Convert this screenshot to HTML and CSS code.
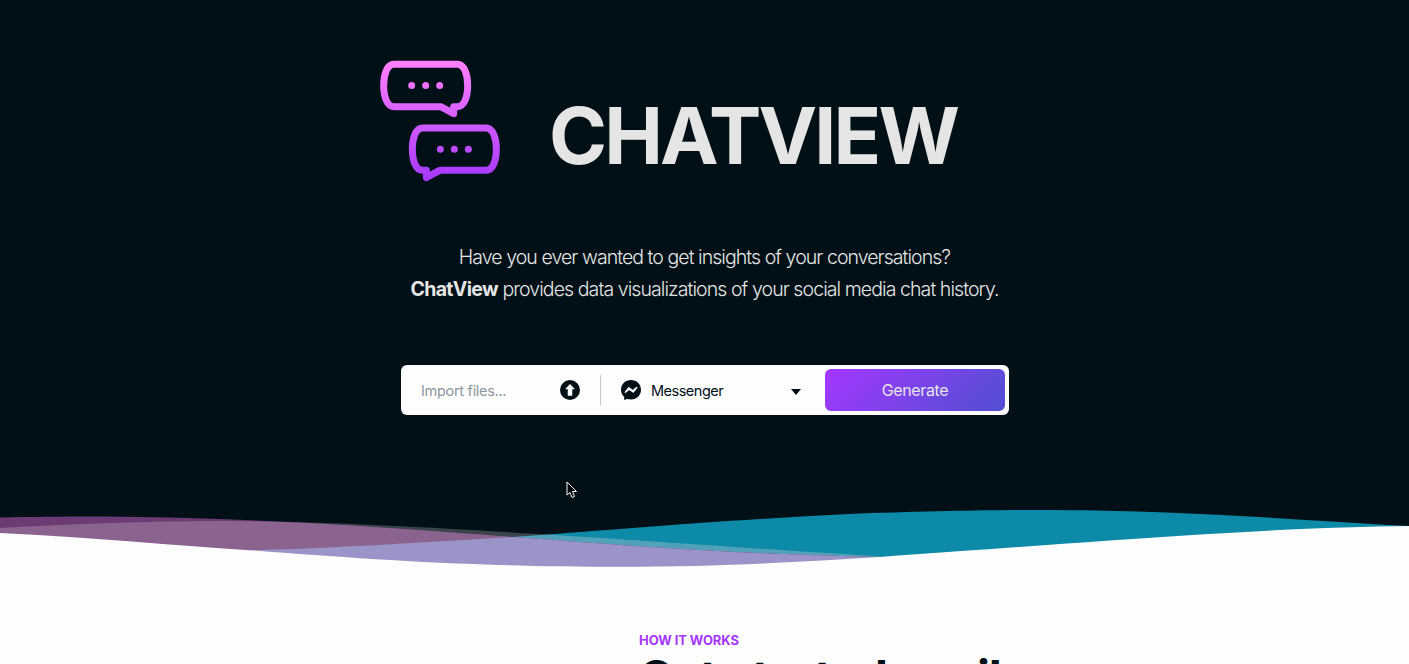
FILE: index.html
```html
<!DOCTYPE html>
<html lang="en">
<head>
<meta charset="utf-8">
<title>ChatView</title>
<link rel="stylesheet" href="styles.css">
</head>
<body>
<header class="hero">
  <div class="brand">
    <svg class="logo" viewBox="0 0 420 420" fill="none">
      <defs>
        <linearGradient id="logo-fill" gradientUnits="userSpaceOnUse" x1="0" y1="33" x2="0" y2="393">
          <stop offset="0" stop-color="#ff80ff"/>
          <stop offset="1" stop-color="#a537ff"/>
        </linearGradient>
      </defs>
      <g stroke="url(#logo-fill)" stroke-width="21" stroke-linejoin="round">
        <path d="M72 43H262C284 43 293 76 293 106C293 138 284 170 262 170H251V191L212 170H72C50 170 41 138 41 106C41 76 50 43 72 43Z"/>
        <path d="M158 234H348C370 234 379 267 379 297C379 329 370 361 348 361H209L169 383V361H158C136 361 127 329 127 297C127 267 136 234 158 234Z"/>
      </g>
      <g fill="url(#logo-fill)">
        <circle cx="125" cy="106.500" r="10.500"/><circle cx="167" cy="106.500" r="10.500"/><circle cx="209" cy="106.500" r="10.500"/>
        <circle cx="211" cy="298" r="10.500"/><circle cx="253" cy="298" r="10.500"/><circle cx="295" cy="298" r="10.500"/>
      </g>
    </svg>
    <h1 class="title">CHATVIEW</h1>
  </div>
  <p class="intro"><span class="line line-first">Have you ever wanted to get insights of your conversations?</span><span class="line line-second"><strong>ChatView</strong> provides data visualizations of your social media chat history.</span></p>
  <form class="import">
    <label class="files"><span class="placeholder">Import files...</span>
      <svg class="icon" viewBox="0 0 20 20"><circle cx="10" cy="10" r="10" fill="#001016"/><path d="M10 4.300L14.400 9H12V15.500H8V9H5.600Z" fill="#fdfdfd" stroke="#fdfdfd" stroke-width=".5" stroke-linejoin="round"/></svg>
    </label>
    <div class="source">
      <svg class="icon" viewBox="0 0 20 20"><path d="M10 0C4.300 0 0 4.200 0 9.700C0 12.600 1.200 15.100 3.200 16.800V20L6.300 18.900C7.500 19.200 8.700 19.400 10 19.400C15.700 19.400 20 15.200 20 9.700S15.700 0 10 0Z" fill="#001016"/><path d="M4.400 12.200L7.800 7.700L11.800 10.700L15.700 7.500L12.200 12L8.200 9.100Z" fill="#fdfdfd" stroke="#fdfdfd" stroke-width="1.400" stroke-linejoin="round"/></svg>
      <span class="source-name">Messenger</span>
      <svg class="caret" viewBox="0 0 10 6"><path d="M0 0H10L5 6Z" fill="#001016"/></svg>
    </div>
    <button class="generate" type="button">Generate</button>
  </form>
</header>
<svg class="waves" viewBox="0 500 1409 80">
  <defs>
    <path id="purple" d="M0 517.500C90 515.500 150 516.500 220 519C350 524 430 531 513 537C610 544 700 553 880 557V580H0Z"/>
    <path id="mist" d="M0 528C80 523.500 160 520.500 230 521C350 522 450 529 540 534C620 539 700 545 880 556.500V580H0Z"/>
    <path id="teal" d="M250 550.300C360 547 440 541 513 537C600 531 720 520 860 513.500C1000 508.800 1070 509.200 1160 512.300C1250 515.500 1330 522 1409 526V580H250Z"/>
    <clipPath id="in-mist"><use href="#mist"/></clipPath>
    <clipPath id="in-teal"><use href="#teal"/></clipPath>
  </defs>
  <use href="#mist" fill="#3a454b"/>
  <use href="#teal" fill="#0c8aa7"/>
  <use href="#teal" fill="#51a2b8" clip-path="url(#in-mist)"/>
  <use href="#purple" fill="#6d3b73"/>
  <use href="#purple" fill="#8b638f" clip-path="url(#in-mist)"/>
  <use href="#purple" fill="#9a94c8" clip-path="url(#in-teal)"/>
  <path d="M0 533C90 537.500 170 545 250 550.300C360 558.500 460 566.800 620 566.800C720 566.500 800 562 880 557C1000 548.500 1100 541 1200 534.500C1280 529.500 1350 526.500 1409 526V580H0Z" fill="#fdfdfd"/>
</svg>
<main class="steps">
  <p class="eyebrow">HOW IT WORKS</p>
  <h2 class="heading">Get started easily</h2>
</main>
<svg class="cursor" viewBox="0 0 12 18"><path d="M1 1V14L4 11.500L6 16.500L8.500 15.500L6.500 10.500H10.500Z" fill="#000" stroke="#fff" stroke-width="1"/></svg>
</body>
</html>
```
FILE: styles.css
```css
* { box-sizing: border-box; }
body {
  margin: 0;
  height: 664px;
  overflow: hidden;
  background: #fdfdfd;
  color: #001016;
  font-family: Inter, "Liberation Sans", sans-serif;
}
.hero {
  height: 500px;
  padding-top: 50px;
  background: #001016;
  color: #e5e5e5;
}
.brand { display: flex; height: 140px; padding-left: 370px; }
.logo { flex: none; width: 140px; height: 140px; }
.title {
  margin: 36px 0 0 39px;
  font-size: 78.500px;
  line-height: 100px;
  font-weight: 700;
  letter-spacing: -2.800px;
}
.intro {
  margin: 51px 0 0;
  font-size: 19.500px;
  line-height: 32px;
  font-weight: 300;
  text-align: center;
  letter-spacing: -.94px;
}
.line { display: block; white-space: nowrap; }
.line-second { letter-spacing: -.92px; }
.intro strong { font-weight: 700; letter-spacing: -.65px; }
.import {
  display: flex;
  width: 608px;
  height: 50px;
  margin: 60px 0 0 401px;
  padding: 4px;
  border-radius: 6px;
  background: #fdfdfd;
  color: #001016;
  font-size: 14.500px;
}
.files {
  display: flex;
  align-items: center;
  justify-content: space-between;
  width: 196px;
  height: 30px;
  margin-top: 6px;
  padding: 0 20px 0 16px;
  border-right: 1px solid #c4c6c8;
}
.placeholder { padding-top: 1px; color: #8d979e; letter-spacing: -.3px; }
.icon { flex: none; width: 20px; height: 20px; }
.source { display: flex; align-items: center; width: 224px; padding: 0 23px 0 20px; }
.source-name { margin-left: 10px; padding-top: 1px; letter-spacing: -.5px; }
.caret { width: 10px; height: 6px; margin: 3px 1px 0 auto; }
.generate {
  width: 180px;
  height: 42px;
  padding: 0;
  border: 0;
  border-radius: 6px;
  background: linear-gradient(135deg, #a537ff, #5050d2);
  color: #e5e5e5;
  font: 400 16px Inter, sans-serif;
  letter-spacing: -.35px;
}
.waves { display: block; width: 1409px; height: 80px; background: #001016; }
.steps { height: 84px; padding: 52px 0 0 639px; overflow: hidden; }
.eyebrow {
  margin: 0;
  color: #a537ff;
  font-size: 13px;
  line-height: 17px;
  font-weight: 700;
  letter-spacing: -.08px;
}
.heading {
  margin: -1px 0 0 -1px;
  font-size: 48px;
  line-height: 60px;
  font-weight: 700;
  letter-spacing: -1.250px;
  white-space: nowrap;
}
.cursor { position: absolute; left: 566px; top: 481px; width: 12px; height: 18px; }
```
